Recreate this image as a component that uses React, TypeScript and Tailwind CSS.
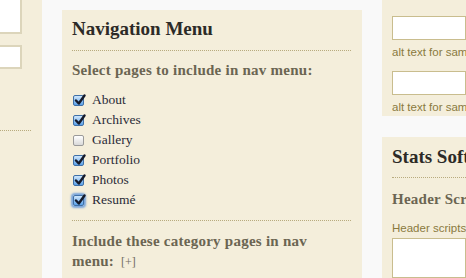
import React from 'react';

const serif = { fontFamily: '"Liberation Serif", "DejaVu Serif", serif' };
const sans = { fontFamily: '"Liberation Sans", Arial, sans-serif' };

type Page = { name: string; checked: boolean; focused?: boolean };

const pages: Page[] = [
    { name: 'About', checked: true },
    { name: 'Archives', checked: true },
    { name: 'Gallery', checked: false },
    { name: 'Portfolio', checked: true },
    { name: 'Photos', checked: true },
    { name: 'Resumé', checked: true, focused: true },
];

function Checkbox({ checked, focused }: { checked: boolean; focused?: boolean }) {
    if (!checked) {
        return (
            <span className="block w-[11px] h-[11px] rounded-[2px] border border-[#9a9a9a] bg-gradient-to-b from-white to-[#d9d9d9]" />
        );
    }
    return (
        <span
            className={
                focused
                    ? 'relative block w-[11px] h-[11px] rounded-[2px] border border-[#3f6fa6] bg-gradient-to-b from-[#cfe6fb] to-[#5aa2ea] shadow-[0_0_2px_2px_rgba(80,140,220,0.75)]'
                    : 'relative block w-[11px] h-[11px] rounded-[2px] border border-[#3f6fa6] bg-gradient-to-b from-[#cfe6fb] to-[#5aa2ea]'
            }
        >
            <svg viewBox="0 0 12 12" className="absolute left-[0px] top-[-2px] w-[12px] h-[12px]">
                <path d="M2 6.5 L4.8 9.5 L10.5 1.5" fill="none" stroke="#141a2c" strokeWidth="2.4" strokeLinecap="round" strokeLinejoin="round" />
            </svg>
        </span>
    );
}

export default function App() {
    return (
        <div className="w-[466px] h-[278px] overflow-hidden bg-[#f9f9f9] flex" style={serif}>
            {/* left column, cut off */}
            <div className="w-[42px] shrink-0 h-full bg-[#f4eedb] flex flex-col">
                <div className="w-[22px] h-[34px] bg-white border-r-2 border-b-2 border-[#dcd5bb]" />
                <div className="w-[22px] h-[24px] mt-[11px] bg-white border-2 border-l-0 border-[#dcd5bb]" />
                <div className="w-[31px] mt-[61px] border-t border-dotted border-[#b8ab7e]" />
            </div>

            {/* navigation menu panel */}
            <div className="w-[300px] shrink-0 ml-[20px] mt-[10px] bg-[#f4eedb] pl-[10px] pr-[11px] pt-[4px]">
                <h2 className="text-[19px] leading-[30px] font-bold text-[#2c2a27]">Navigation Menu</h2>
                <div className="mt-[6px] border-t border-dotted border-[#b8ab7e]" />
                <p className="mt-[9px] text-[15px] leading-[20px] font-bold tracking-[0.25px] text-[#6b6552]">
                    Select pages to include in nav menu:
                </p>
                <ul className="mt-[10px]">
                    {pages.map((p) => (
                        <li key={p.name} className="h-[20px] flex items-center">
                            <span className="w-[12px] ml-[1px]">
                                <Checkbox checked={p.checked} focused={p.focused} />
                            </span>
                            <span className="ml-[7px] text-[13.5px] text-[#2b2b38]">{p.name}</span>
                        </li>
                    ))}
                </ul>
                <div className="mt-[10px] border-t border-dotted border-[#b8ab7e]" />
                <p className="mt-[10px] text-[15px] leading-[20px] font-bold tracking-[0.25px] text-[#6b6552]">
                    Include these category pages in nav
                    <br />
                    menu:
                    <span className="ml-[7px] text-[12px] font-normal tracking-normal text-[#6f6b60]">[+]</span>
                </p>
            </div>

            {/* right column */}
            <div className="flex-1 min-w-0 ml-[20px] flex flex-col">
                <div className="h-[135px] bg-[#f4eedb] pl-[10px] pt-[16px]">
                    <div className="h-[24px] bg-white border border-[#c9bd8e]" />
                    <p className="mt-[5px] text-[11.5px] leading-[14px] text-[#8a7a3e] whitespace-nowrap" style={sans}>
                        alt text for sam
                    </p>
                    <div className="mt-[12px] h-[24px] bg-white border border-[#c9bd8e]" />
                    <p className="mt-[5px] text-[11.5px] leading-[14px] text-[#8a7a3e] whitespace-nowrap" style={sans}>
                        alt text for sam
                    </p>
                </div>
                <div className="mt-[21px] flex-1 bg-[#f4eedb] pl-[10px] pt-[6px]">
                    <h2 className="text-[19px] leading-[28px] font-bold text-[#2c2a27] whitespace-nowrap">Stats Soft</h2>
                    <div className="mt-[6px] border-t border-dotted border-[#b8ab7e]" />
                    <p className="mt-[11px] text-[15px] leading-[20px] font-bold tracking-[0.25px] text-[#6b6552] whitespace-nowrap">
                        Header Scr
                    </p>
                    <p className="mt-[12px] text-[11.5px] leading-[14px] text-[#8a7a3e] whitespace-nowrap" style={sans}>
                        Header scripts
                    </p>
                    <div className="mt-[3px] h-[40px] bg-white border border-[#c9bd8e]" />
                </div>
            </div>
        </div>
    );
}
